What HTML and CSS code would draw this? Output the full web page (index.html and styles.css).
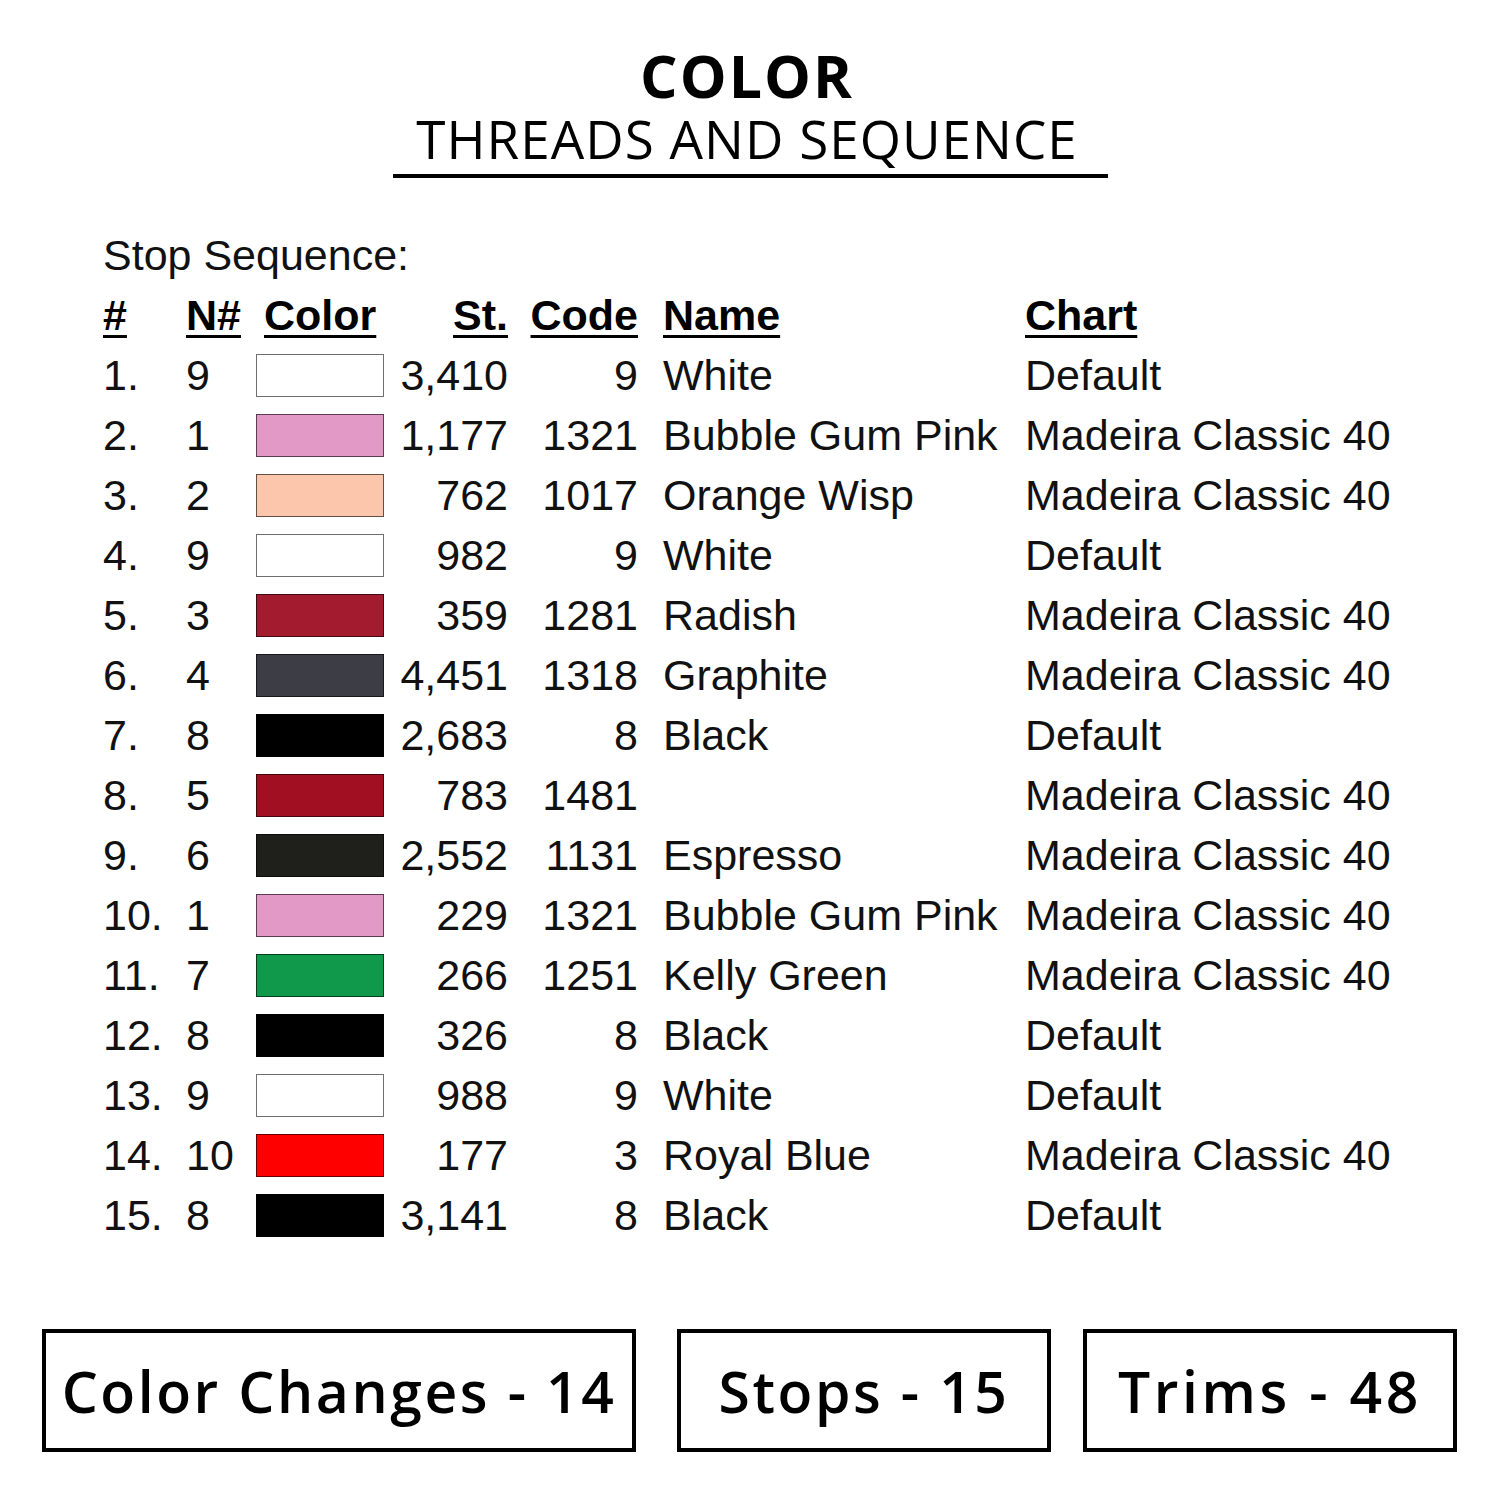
FILE: index.html
```html
<!DOCTYPE html>
<html>
<head>
<meta charset="utf-8">
<link rel="stylesheet" href="styles.css">
</head>
<body>
<div class="page">
  <header class="title">
    <div class="title-main">COLOR</div>
    <div class="title-sub">THREADS AND SEQUENCE</div>
    <div class="title-rule"></div>
  </header>

  <section class="seq">
    <div class="seq-label">Stop Sequence:</div>
    <div class="row head">
      <div class="c-num"><u>#</u></div>
      <div class="c-n"><u>N#</u></div>
      <div class="c-color"><u>Color</u></div>
      <div class="c-st"><u>St.</u></div>
      <div class="c-code"><u>Code</u></div>
      <div class="c-name"><u>Name</u></div>
      <div class="c-chart"><u>Chart</u></div>
    </div>

    <div class="row"><div class="c-num">1.</div><div class="c-n">9</div><div class="c-color"><span class="sw sw-white"></span></div><div class="c-st">3,410</div><div class="c-code">9</div><div class="c-name">White</div><div class="c-chart">Default</div></div>
    <div class="row"><div class="c-num">2.</div><div class="c-n">1</div><div class="c-color"><span class="sw sw-pink"></span></div><div class="c-st">1,177</div><div class="c-code">1321</div><div class="c-name">Bubble Gum Pink</div><div class="c-chart">Madeira Classic 40</div></div>
    <div class="row"><div class="c-num">3.</div><div class="c-n">2</div><div class="c-color"><span class="sw sw-orange"></span></div><div class="c-st">762</div><div class="c-code">1017</div><div class="c-name">Orange Wisp</div><div class="c-chart">Madeira Classic 40</div></div>
    <div class="row"><div class="c-num">4.</div><div class="c-n">9</div><div class="c-color"><span class="sw sw-white"></span></div><div class="c-st">982</div><div class="c-code">9</div><div class="c-name">White</div><div class="c-chart">Default</div></div>
    <div class="row"><div class="c-num">5.</div><div class="c-n">3</div><div class="c-color"><span class="sw sw-radish"></span></div><div class="c-st">359</div><div class="c-code">1281</div><div class="c-name">Radish</div><div class="c-chart">Madeira Classic 40</div></div>
    <div class="row"><div class="c-num">6.</div><div class="c-n">4</div><div class="c-color"><span class="sw sw-graphite"></span></div><div class="c-st">4,451</div><div class="c-code">1318</div><div class="c-name">Graphite</div><div class="c-chart">Madeira Classic 40</div></div>
    <div class="row"><div class="c-num">7.</div><div class="c-n">8</div><div class="c-color"><span class="sw sw-black"></span></div><div class="c-st">2,683</div><div class="c-code">8</div><div class="c-name">Black</div><div class="c-chart">Default</div></div>
    <div class="row"><div class="c-num">8.</div><div class="c-n">5</div><div class="c-color"><span class="sw sw-crimson"></span></div><div class="c-st">783</div><div class="c-code">1481</div><div class="c-name"></div><div class="c-chart">Madeira Classic 40</div></div>
    <div class="row"><div class="c-num">9.</div><div class="c-n">6</div><div class="c-color"><span class="sw sw-espresso"></span></div><div class="c-st">2,552</div><div class="c-code">1131</div><div class="c-name">Espresso</div><div class="c-chart">Madeira Classic 40</div></div>
    <div class="row"><div class="c-num">10.</div><div class="c-n">1</div><div class="c-color"><span class="sw sw-pink"></span></div><div class="c-st">229</div><div class="c-code">1321</div><div class="c-name">Bubble Gum Pink</div><div class="c-chart">Madeira Classic 40</div></div>
    <div class="row"><div class="c-num">11.</div><div class="c-n">7</div><div class="c-color"><span class="sw sw-green"></span></div><div class="c-st">266</div><div class="c-code">1251</div><div class="c-name">Kelly Green</div><div class="c-chart">Madeira Classic 40</div></div>
    <div class="row"><div class="c-num">12.</div><div class="c-n">8</div><div class="c-color"><span class="sw sw-black"></span></div><div class="c-st">326</div><div class="c-code">8</div><div class="c-name">Black</div><div class="c-chart">Default</div></div>
    <div class="row"><div class="c-num">13.</div><div class="c-n">9</div><div class="c-color"><span class="sw sw-white"></span></div><div class="c-st">988</div><div class="c-code">9</div><div class="c-name">White</div><div class="c-chart">Default</div></div>
    <div class="row"><div class="c-num">14.</div><div class="c-n">10</div><div class="c-color"><span class="sw sw-red"></span></div><div class="c-st">177</div><div class="c-code">3</div><div class="c-name">Royal Blue</div><div class="c-chart">Madeira Classic 40</div></div>
    <div class="row"><div class="c-num">15.</div><div class="c-n">8</div><div class="c-color"><span class="sw sw-black"></span></div><div class="c-st">3,141</div><div class="c-code">8</div><div class="c-name">Black</div><div class="c-chart">Default</div></div>
  </section>

  <section class="stats">
    <div class="stat stat-wide">Color Changes - 14</div>
    <div class="stat stat-mid">Stops - 15</div>
    <div class="stat stat-end">Trims - 48</div>
  </section>
</div>
</body>
</html>
```

FILE: styles.css
```css
html, body {
  margin: 0;
  padding: 0;
  background: #ffffff;
}

.page {
  width: 1500px;
  height: 1500px;
  display: flex;
  flex-direction: column;
  color: #000;
}

.title {
  display: flex;
  flex-direction: column;
  align-items: center;
  padding-top: 43px;
  padding-right: 6px;
}

.title-main {
  font-family: "Open Sans", sans-serif;
  font-weight: 700;
  font-size: 59px;
  line-height: 64px;
  letter-spacing: 2px;
}

.title-sub {
  font-family: "Open Sans", sans-serif;
  font-weight: 400;
  font-size: 53px;
  line-height: 64px;
  letter-spacing: 1px;
}

.title-rule {
  width: 715px;
  height: 4px;
  background: #000;
  margin-top: 3px;
  margin-left: 6px;
}

.seq {
  font-family: "Liberation Sans", Arial, sans-serif;
  font-size: 43px;
  color: #111;
  padding-left: 103px;
  margin-top: 47px;
}

.seq-label {
  line-height: 60px;
  height: 60px;
}

.row {
  display: grid;
  grid-template-columns: 83px 70px 128px 124px 130px 389px auto;
  align-items: center;
  height: 60px;
  line-height: 60px;
  white-space: nowrap;
}

.row.head {
  font-weight: 700;
  color: #000;
}

.row.head u {
  text-decoration-thickness: 3px;
  text-underline-offset: 5px;
}

.row.head .c-color {
  padding-left: 8px;
}

.c-st, .c-code {
  text-align: right;
}

.c-name {
  padding-left: 25px;
}

.c-chart {
  margin-left: -2px;
}

.c-color {
  display: flex;
  align-items: center;
}

.sw {
  display: block;
  width: 128px;
  height: 43px;
  box-sizing: border-box;
  border: 1.5px solid rgba(0, 0, 0, 0.6);
}

.sw-white { background: #ffffff; border-color: #6e6e6e; }
.sw-pink { background: #e299c6; }
.sw-orange { background: #fbc6ac; }
.sw-radish { background: #a21b2f; }
.sw-graphite { background: #3c3d45; }
.sw-black { background: #000000; }
.sw-crimson { background: #a00f22; }
.sw-espresso { background: #1f201b; }
.sw-green { background: #10994a; }
.sw-red { background: #ff0000; }

.stats {
  display: flex;
  margin-top: auto;
  margin-bottom: 48px;
  padding-left: 42px;
}

.stat {
  box-sizing: border-box;
  height: 123px;
  border: 4px solid #000;
  display: flex;
  align-items: center;
  justify-content: center;
  font-family: "Open Sans", sans-serif;
  font-weight: 600;
  font-size: 57px;
  letter-spacing: 2.6px;
  white-space: nowrap;
}

.stat-wide { width: 594px; }
.stat-mid { width: 374px; margin-left: 41px; }
.stat-end { width: 374px; margin-left: 32px; letter-spacing: 3.6px; }
```
